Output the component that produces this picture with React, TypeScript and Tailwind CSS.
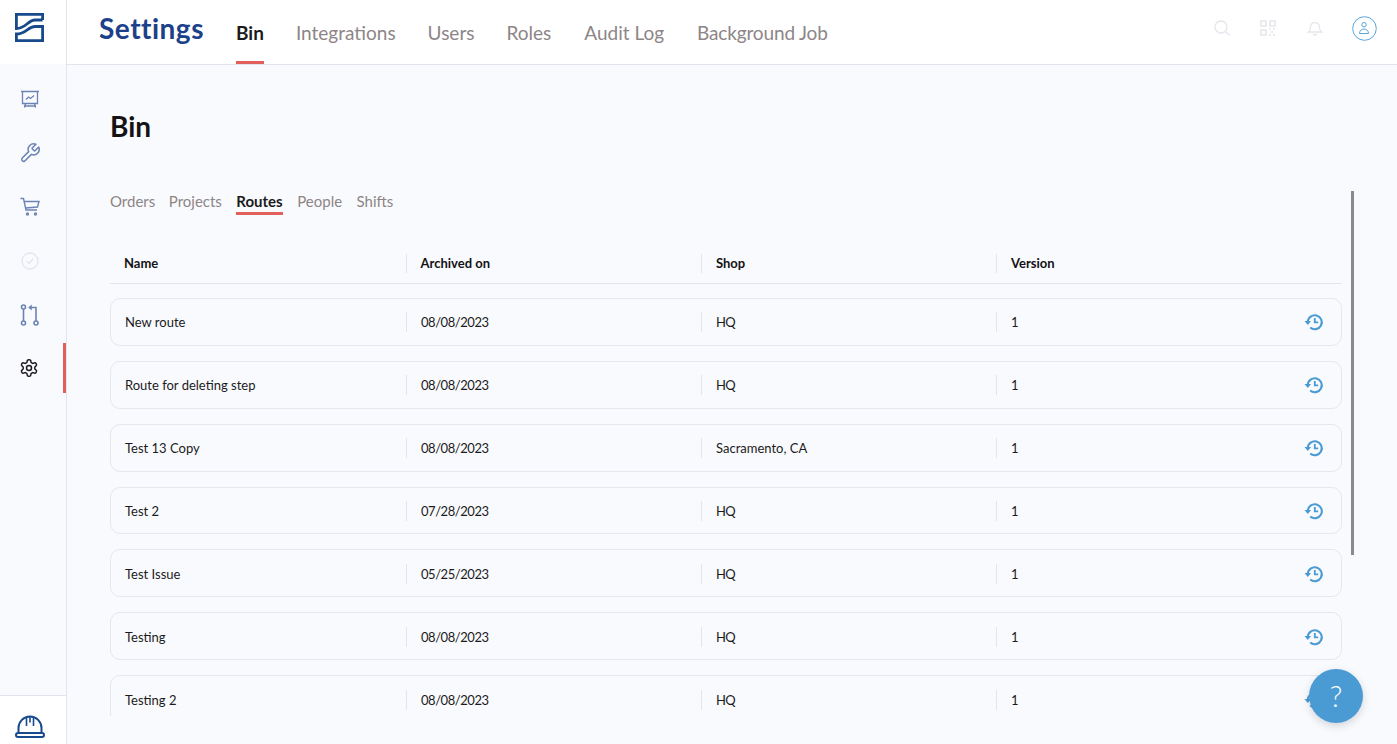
import React from "react";

const rows = [
  ["New route", "08/08/2023", "HQ"],
  ["Route for deleting step", "08/08/2023", "HQ"],
  ["Test 13 Copy", "08/08/2023", "Sacramento, CA"],
  ["Test 2", "07/28/2023", "HQ"],
  ["Test Issue", "05/25/2023", "HQ"],
  ["Testing", "08/08/2023", "HQ"],
  ["Testing 2", "08/08/2023", "HQ"],
];

function Restore() {
  return (
    <svg width="20" height="20" viewBox="0 0 20 20" fill="none" stroke="#4a9bd4" strokeWidth="2.100">
      <path d="M3.800 10a7 7 0 1 1 2.400 5.500" />
      <path d="M0.500 9h6.600l-3.300 4z" fill="#4a9bd4" stroke="none" />
      <path d="M10.800 6v4.400h3.400" strokeWidth="1.800" />
    </svg>
  );
}

function Side({ children, className = "" }: { children: React.ReactNode; className?: string }) {
  return <div className={"h-[54px] flex items-center justify-center pr-[7px] " + className}>{children}</div>;
}

export default function App() {
  return (
    <div className="w-[1397px] h-[744px] overflow-hidden flex bg-[#f9fafd] text-[#1c1a1c] font-['Lato','Noto_Sans',sans-serif] relative">
      <aside className="w-[67px] shrink-0 border-r border-[#e2e4ee] flex flex-col">
        <div className="h-[64px] bg-white flex items-start justify-start pl-[15px] pt-[13px]">
          <svg width="29" height="29" viewBox="0 0 29 29" fill="none" stroke="#174a8c" strokeWidth="2.800">
            <path d="M27.600 7H20C13 7 11 15.500 1.400 15.500V1.400H27.600V7" />
            <path d="M1.400 21C11 21 13 13.500 20 13.500H27.600V27.600H1.400Z" />
          </svg>
        </div>
        <nav className="pt-[8px] flex flex-col">
          <Side>
            <svg width="20" height="20" viewBox="0 0 20 20" fill="none" stroke="#6c84b4" strokeWidth="1.300" className="mt-[2px]">
              <path d="M1 1.500h18M2.500 1.500v12h15v-12M5.500 13.500l-1 4M14.500 13.500l1 4M4 16h12" />
              <path d="M6 9.500l2.500-2.500 2 1.500 3.500-3" />
            </svg>
          </Side>
          <Side>
            <svg width="22" height="22" viewBox="0 0 24 24" fill="none" stroke="#6c84b4" strokeWidth="1.700" strokeLinejoin="round">
              <path d="M14.700 6.300a1 1 0 0 0 0 1.400l1.600 1.600a1 1 0 0 0 1.400 0l3.770-3.770a6 6 0 0 1-7.940 7.940l-6.910 6.910a2.120 2.120 0 0 1-3-3l6.910-6.910a6 6 0 0 1 7.940-7.940l-3.760 3.760z" />
            </svg>
          </Side>
          <Side>
            <svg width="20" height="20" viewBox="0 0 20 20" fill="none" stroke="#6c84b4" strokeWidth="1.400">
              <path d="M0.500 1.500h3l2.500 11.500h11M4.300 4.500h14.700l-1.500 5.500-11.800 1" />
              <circle cx="7.500" cy="17" r="1" />
              <circle cx="15.500" cy="17" r="1" />
            </svg>
          </Side>
          <Side>
            <svg width="18" height="18" viewBox="0 0 18 18" fill="none" stroke="#e2e5ef" strokeWidth="1.300">
              <circle cx="9" cy="9" r="8" />
              <path d="M5.800 9.300l2.200 2.200 4.200-4.700" />
            </svg>
          </Side>
          <Side>
            <svg width="20" height="22" viewBox="0 0 20 22" fill="none" stroke="#6c84b4" strokeWidth="1.600">
              <circle cx="3.500" cy="3" r="2" />
              <circle cx="3.500" cy="19" r="2" />
              <circle cx="16" cy="19" r="2" />
              <path d="M3.500 5v12M16 17V3.500H10" />
              <path d="M11.500 1l-3 2.500 3 2.500z" fill="#6c84b4" strokeWidth="0.500" />
            </svg>
          </Side>
          <div className="h-[50px] mt-[1px] flex items-center justify-center pr-[8px] relative">
            <svg width="20" height="20" viewBox="0 0 24 24" fill="none" stroke="#1c1a1c" strokeWidth="1.800" strokeLinecap="round" strokeLinejoin="round">
              <path d="M12.220 2h-.44a2 2 0 0 0-2 2v.180a2 2 0 0 1-1 1.730l-.43.250a2 2 0 0 1-2 0l-.15-.080a2 2 0 0 0-2.730.730l-.220.380a2 2 0 0 0 .730 2.730l.150.100a2 2 0 0 1 1 1.720v.510a2 2 0 0 1-1 1.740l-.150.090a2 2 0 0 0-.730 2.730l.220.380a2 2 0 0 0 2.730.730l.150-.080a2 2 0 0 1 2 0l.430.250a2 2 0 0 1 1 1.730V20a2 2 0 0 0 2 2h.440a2 2 0 0 0 2-2v-.180a2 2 0 0 1 1-1.730l.430-.250a2 2 0 0 1 2 0l.150.080a2 2 0 0 0 2.730-.730l.220-.390a2 2 0 0 0-.730-2.730l-.150-.080a2 2 0 0 1-1-1.740v-.500a2 2 0 0 1 1-1.740l.150-.090a2 2 0 0 0 .730-2.730l-.220-.380a2 2 0 0 0-2.730-.730l-.150.080a2 2 0 0 1-2 0l-.430-.250a2 2 0 0 1-1-1.730V4a2 2 0 0 0-2-2z" />
              <circle cx="12" cy="12" r="3" />
            </svg>
            <span className="absolute right-0 top-0 bottom-0 w-[3px] bg-[#e2605c]" />
          </div>
        </nav>
        <div className="mt-auto h-[49px] bg-white border-t border-[#e2e4ee] flex items-start justify-center pr-[7px] pt-[19px]">
          <svg width="30" height="24" viewBox="0 0 30 24" fill="none" stroke="#174a8c" strokeWidth="2">
            <path d="M3.500 17v-4a11.500 11.500 0 0 1 23 0v4" />
            <rect x="1" y="18" width="28" height="4" rx="2" />
            <path d="M11.500 3v8M18.500 3v8M15 1.500v6" strokeWidth="1.600" />
          </svg>
        </div>
      </aside>

      <div className="flex-1 min-w-0 flex flex-col">
        <header className="h-[65px] shrink-0 bg-white border-b border-[#e2e4ee] flex pl-[32px] pr-[20px]">
          <h1 className="text-[28px] leading-[56px] font-bold text-[#1d4189] w-[137px] tracking-[0.500px]">Settings</h1>
          <div className="flex gap-[32px] text-[19px] text-[#8d8587]">
            <div className="h-[64px] leading-[66px] font-bold text-[#1c1a1c] border-b-[3px] border-[#e2605c]">Bin</div>
            <div className="leading-[66px]">Integrations</div>
            <div className="leading-[66px]">Users</div>
            <div className="leading-[66px]">Roles</div>
            <div className="leading-[66px] ml-[1px]">Audit Log</div>
            <div className="leading-[66px] ml-[1px] tracking-[-0.150px]">Background Job</div>
          </div>
          <div className="ml-auto flex items-center gap-[30px] pb-[8px]">
            <svg width="16" height="16" viewBox="0 0 16 16" fill="none" stroke="#e4e6ec" strokeWidth="1.300">
              <circle cx="7" cy="7" r="6" />
              <path d="M11.500 11.500l4 4" />
            </svg>
            <svg width="16" height="16" viewBox="0 0 16 16" fill="none" stroke="#e4e6ec" strokeWidth="1.500">
              <rect x="1" y="1" width="5" height="5" />
              <rect x="10" y="1" width="5" height="5" />
              <rect x="1" y="10" width="5" height="5" />
              <path d="M9 9h2M13 9h2M11 12h2M9 15h2M13 15h2" />
            </svg>
            <svg width="16" height="16" viewBox="0 0 16 16" fill="none" stroke="#e4e6ec" strokeWidth="1.300" className="ml-[1px]">
              <path d="M1.500 12c1.500-1 2-2 2-5a4.500 4.500 0 0 1 9 0c0 3 .5 4 2 5z" />
              <path d="M6 14c1 1.300 3 1.300 4 0" />
            </svg>
            <svg width="25" height="25" viewBox="0 0 25 25" fill="none" stroke="#5aa5dc" strokeWidth="1" className="ml-[-1px]">
              <circle cx="12.500" cy="12.500" r="11.800" />
              <circle cx="12" cy="8.700" r="2.200" />
              <path d="M7.500 17.500c0-6 9-6 9 0z" />
            </svg>
          </div>
        </header>

        <main className="flex-1 min-h-0 flex flex-col pl-[43px] overflow-hidden">
          <h2 className="mt-[42px] text-[28px] leading-[38px] font-bold text-[#141214]">Bin</h2>
          <div className="mt-[42px] flex gap-[14.500px] text-[15px] text-[#8d8587] h-[28px]">
            <div className="leading-[28px] mr-[-1px]">Orders</div>
            <div className="leading-[28px]">Projects</div>
            <div className="leading-[28px] font-bold text-[#1c1a1c] h-[28px] border-b-[3px] border-[#e2605c]">Routes</div>
            <div className="leading-[28px]">People</div>
            <div className="leading-[28px]">Shifts</div>
          </div>
          <div className="flex">
            <div className="w-[1232px] h-[501px] overflow-hidden pt-[35px]">
              <div className="h-[34px] border-b border-[#e2e4ee] grid grid-cols-[295.500px_295.500px_295px_1fr] text-[13px] font-bold text-[#141214]">
                {["Name", "Archived on", "Shop", "Version"].map((h, i) => (
                  <div key={h} className={"h-[19px] mt-[4px] leading-[19px] pl-[14px] " + (i > 0 ? "border-l border-[#e2e4ee]" : "")}>
                    {h}
                  </div>
                ))}
              </div>
              <div className="mt-[14.050px] flex flex-col gap-[15px]">
                {rows.map((r) => (
                  <div key={r[0]} className="h-[47.850px] pt-[1px] shrink-0 rounded-[10px] border border-[#e6e7ee] grid grid-cols-[295px_295px_295px_1fr] items-center text-[13px] text-[#1c1a1c]">
                    <div className="h-[20px] leading-[20px] pl-[14px]">{r[0]}</div>
                    <div className="h-[20px] leading-[20px] border-l border-[#e2e4ee] pl-[14px] tracking-[-0.450px]">{r[1]}</div>
                    <div className={"h-[20px] leading-[20px] border-l border-[#e2e4ee] pl-[14px] " + (r[2] === "HQ" ? "tracking-[-0.800px]" : "")}>{r[2]}</div>
                    <div className="h-[20px] leading-[20px] border-l border-[#e2e4ee] pl-[14px] pr-[17px] flex items-center justify-between">
                      <span>1</span>
                      <Restore />
                    </div>
                  </div>
                ))}
              </div>
            </div>
            <div className="ml-[9px] w-[3px] h-[364px] mt-[-24px] bg-[#8a8a8e]" />
          </div>
        </main>
      </div>

      <div className="absolute left-[1309px] top-[669px] w-[54px] h-[54px] rounded-full bg-[#4a9bd4] shadow-[0_3px_8px_rgba(0,0,0,0.15)] flex items-center justify-center text-white text-[29px] font-light">
        ?
      </div>
    </div>
  );
}
